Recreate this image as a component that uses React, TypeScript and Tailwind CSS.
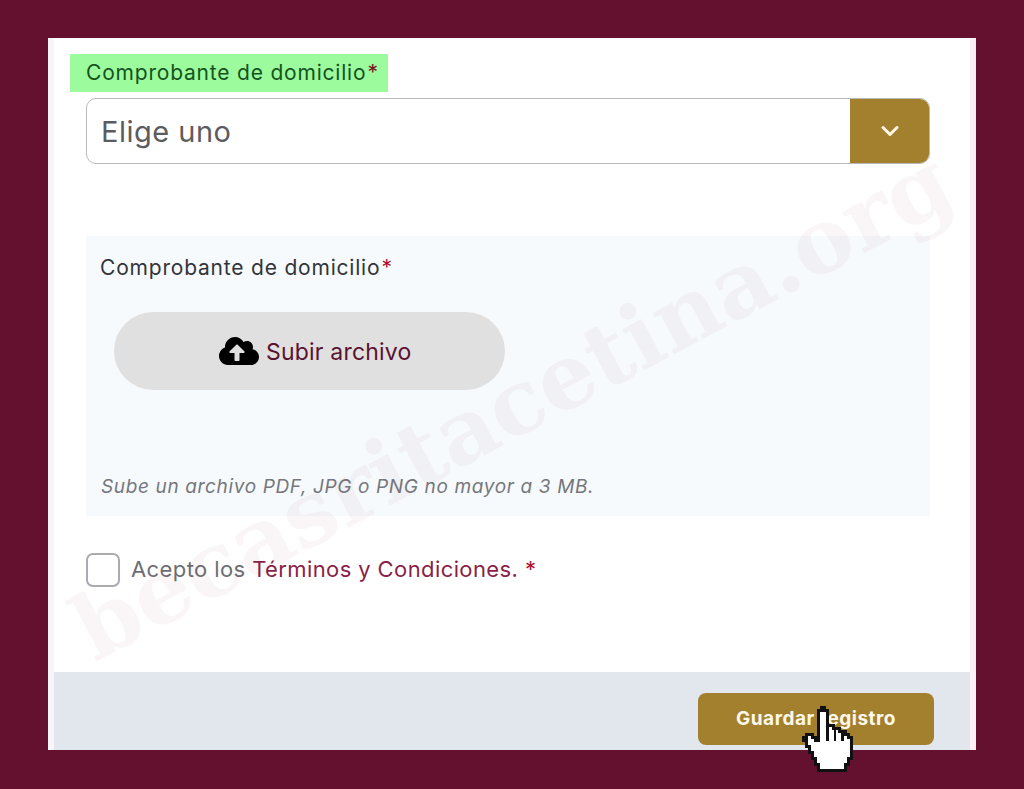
import { ChevronDown } from 'lucide-react'
import { FaCloudUploadAlt } from 'react-icons/fa'

const FONT = "font-['Inter','Noto_Sans',sans-serif]"

// the hand pointer sitting over the save button
function HandCursor() {
  return (
    <svg
      viewBox="-0.5 -0.5 18 23"
      className="pointer-events-none absolute left-[748px] top-[668px] h-[69px] w-[54px]"
      shapeRendering="crispEdges"
    >
      <path
        d="M5 1H6V0H7V1H8V6H10V7H12V8H14V9H15V10H16V17H15V19H14V21H5V19H4V17H3V15H2V13H1V11H0V10H1V9H3V10H4V11H5Z"
        fill="#fff"
        stroke="#111"
        strokeWidth="1"
      />
      <path d="M8 6V11M10.5 7V11M13 8V11" fill="none" stroke="#111" strokeWidth="0.7" />
    </svg>
  )
}

export default function App() {
  return (
    <div className={`${FONT} h-[789px] w-[1024px] overflow-hidden bg-[#63112f] pl-[48px] pt-[38px]`}>
      <div className="relative flex h-[712px] w-[928px] flex-col border-r-[6px] border-l-[6px] border-r-[#fcf1f5] border-l-[#f6f6f9] bg-white">
        <div className="flex flex-col pl-[32px] pr-[40px]">
          <div className="mt-[16px] -ml-[16px] flex h-[38px] w-[318px] items-center bg-[#9cfb9c] pl-[16px] text-[21px] tracking-[0.8px] text-[#14531f]">
            Comprobante de domicilio<span className="ml-[1px] text-[#7a1020]">*</span>
          </div>

          <div className="mt-[6px] flex h-[66px] items-stretch overflow-hidden rounded-[10px] border border-[#b9b9b9]">
            <div className="flex flex-1 items-center pl-[14px] pt-[2px] text-[29px] tracking-[0.5px] text-[#5c5c5e]">Elige uno</div>
            <div className="flex w-[79px] items-center justify-center bg-[#a3802e]">
              <ChevronDown className="h-[28px] w-[28px] text-[#fdf6e6]" strokeWidth={2.6} />
            </div>
          </div>

          <div className="mt-[72px] flex h-[280px] flex-col bg-[#f6fafd] pl-[14px]">
            <div className="mt-[19px] text-[21px] leading-[26px] tracking-[0.8px] text-[#33343a]">
              Comprobante de domicilio<span className="ml-[1px] text-[#b01030]">*</span>
            </div>
            <div className="ml-[14px] mt-[31px] flex h-[78px] w-[391px] items-center gap-[7px] rounded-[39px] bg-[#e0e0e0] pl-[105px]">
              <FaCloudUploadAlt className="h-[40px] w-[40px] text-black" />
              <span className="pt-[2px] text-[23px] tracking-[0.2px] text-[#5a1230]">Subir archivo</span>
            </div>
            <div className="mt-[84px] pl-[1px] text-[19px] italic leading-[26px] tracking-[0.64px] text-[#75777c]">
              Sube un archivo PDF, JPG o PNG no mayor a 3 MB.
            </div>
          </div>

          <div className="mt-[37px] flex h-[34px] items-center">
            <div className="h-[34px] w-[34px] rounded-[7px] border-[2px] border-[#a9abb0] bg-white" />
            <div className="ml-[11px] pb-[2px] text-[22px] tracking-[0.4px] text-[#6d6e72]">
              Acepto los <span className="text-[#8a1f47]">Términos y Condiciones.</span>{' '}
              <span className="text-[#b01030]">*</span>
            </div>
          </div>
        </div>

        <div className="mt-auto flex h-[78px] items-start justify-end bg-[#e2e7ee] pr-[36px] pt-[21px]">
          <div className="flex h-[52px] w-[236px] items-center justify-center rounded-[8px] bg-[#a3802e] text-[19px] font-bold tracking-[0.5px] text-[#fdf8ea]">
            Guardar registro
          </div>
        </div>

        <div className="pointer-events-none absolute left-[458px] top-[367px] -translate-x-1/2 -translate-y-1/2 rotate-[-28deg] whitespace-nowrap font-['DejaVu_Serif',serif] text-[90px] font-bold text-[#7a1a3a]/[0.04]">
          becasritacetina.org
        </div>

        <HandCursor />
      </div>
    </div>
  )
}
